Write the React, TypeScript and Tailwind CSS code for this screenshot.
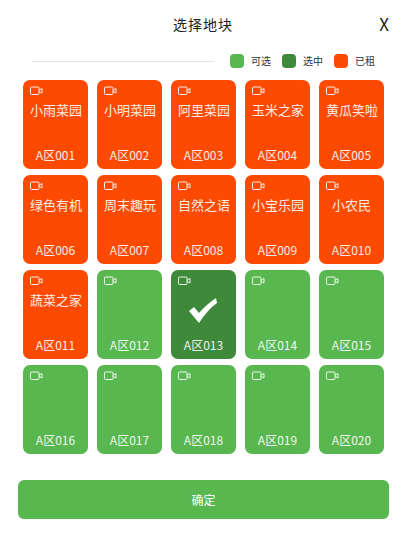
import React from "react";

type Status = "rented" | "free" | "selected";

interface Plot {
  code: string;
  name?: string;
  status: Status;
}

const names = ["小雨菜园", "小明菜园", "阿里菜园", "玉米之家", "黄瓜笑啦", "绿色有机", "周末趣玩", "自然之语", "小宝乐园", "小农民", "蔬菜之家"];

const plots: Plot[] = Array.from({ length: 20 }, (_, i) => ({
  code: "A区" + String(i + 1).padStart(3, "0"),
  name: names[i],
  status: i < 11 ? "rented" : i === 12 ? "selected" : "free",
}));

const statusClass: Record<Status, string> = {
  rented: "bg-[#fc4a03]",
  free: "bg-[#59b74f]",
  selected: "bg-[#3f8a3a]",
};

const CameraIcon = () => (
  <svg width="13" height="10" viewBox="0 0 13 10" fill="none" stroke="white" strokeWidth="1" className="opacity-90">
    <rect x="0.5" y="1" width="8.5" height="7.5" rx="1" />
    <path d="M9 4.2 L12 2.5 V7 L9 5.4" />
  </svg>
);

const PlotCard = ({ plot }: { plot: Plot }) => (
  <div className={`relative h-[89px] rounded-[7px] pt-[6px] px-[7px] text-white ${statusClass[plot.status]}`}>
    <CameraIcon />
    {plot.name && <div className="mt-[4px] text-center text-[13px] leading-[20px] opacity-90 whitespace-nowrap">{plot.name}</div>}
    {plot.status === "selected" && (
      <svg width="29" height="25" viewBox="0 0 29 25" className="absolute left-[18px] top-[28px]">
        <path d="M0 13 L5 9 L10 15 C15 9 21 4 27 0 L28 5 C21 10 15 17 10 25 Z" fill="white" />
      </svg>
    )}
    <div className="absolute bottom-[6px] left-0 right-0 text-center text-[12px] leading-[16px] opacity-90">{plot.code}</div>
  </div>
);

const Legend = ({ color, label }: { color: string; label: string }) => (
  <div className="flex items-center gap-[7px]">
    <span className={`h-[14px] w-[14px] rounded-[4px] ${color}`} />
    <span className="text-[10px] leading-[14px] text-[#333]">{label}</span>
  </div>
);

export default function App() {
  return (
    <div className="h-[542px] w-[406px] bg-white font-['Noto_Sans_CJK_SC','Noto_Sans',sans-serif]">
      <div className="relative flex h-[48px] items-center justify-center">
        <span className="text-[14px] tracking-[1px] text-[#222]">选择地块</span>
        <span className="absolute right-[17px] top-[12px] text-[17px] leading-[24px] text-[#222]">X</span>
      </div>
      <div className="flex items-center pl-[32px] pr-[18px] pt-[6px]">
        <div className="h-px w-[182px] bg-[#e4e4e4]" />
        <div className="ml-[16px] flex gap-[11px]">
          <Legend color="bg-[#59b74f]" label="可选" />
          <Legend color="bg-[#3f8a3a]" label="选中" />
          <Legend color="bg-[#fc4a03]" label="已租" />
        </div>
      </div>
      <div className="mt-[12px] grid grid-cols-5 gap-x-[9px] gap-y-[6px] pl-[23px] pr-[22px]">
        {plots.map((plot) => (
          <PlotCard key={plot.code} plot={plot} />
        ))}
      </div>
      <button className="mx-[18px] mt-[26px] block h-[39px] w-[371px] rounded-[6px] bg-[#59b74f] text-[12px] text-white">确定</button>
    </div>
  );
}
